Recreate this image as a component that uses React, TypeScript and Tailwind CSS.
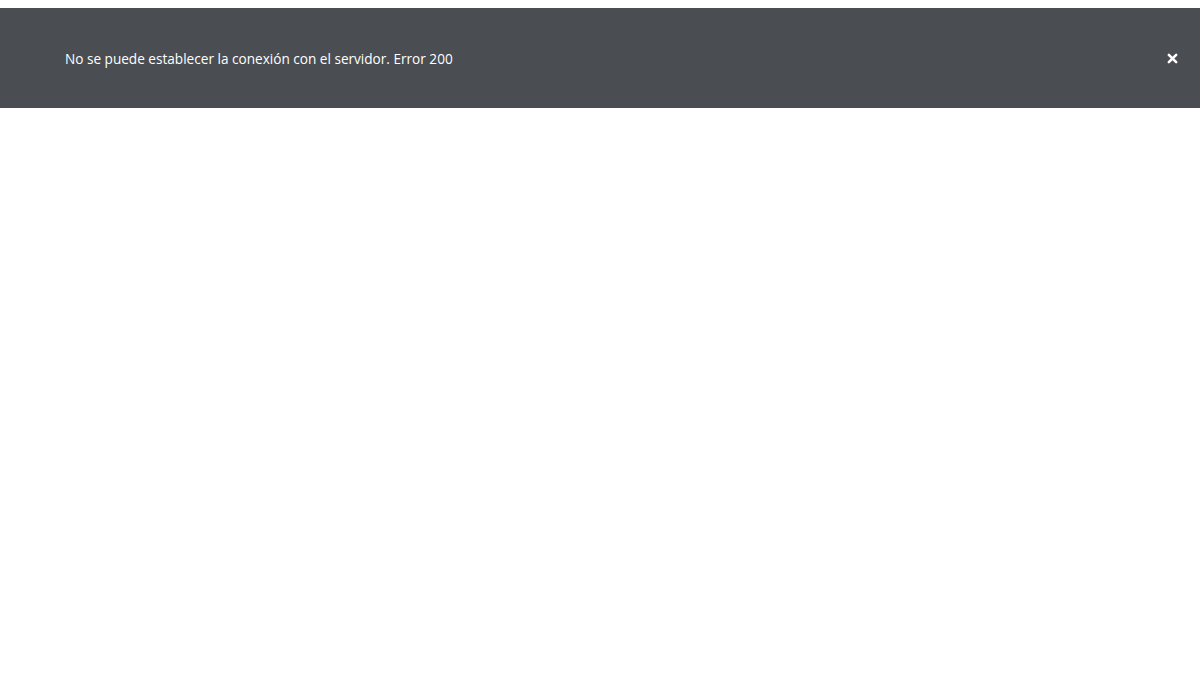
export default function App() {
  return (
    <div className="min-h-[682px] w-full bg-white pt-2" style={{ fontFamily: '"Open Sans", "Noto Sans", sans-serif' }}>
      <div className="flex h-[100px] items-center justify-between bg-[#4a4d52] pl-[65px] pr-[22px]">
        <p className="mt-[2px] text-[13.6px] leading-5 text-white">No se puede establecer la conexión con el servidor. Error 200</p>
        <button type="button" aria-label="Cerrar" className="-mr-[2px] flex h-4 w-4 items-center justify-center text-white">
          <svg viewBox="0 0 12 12" className="h-[11px] w-[11px]">
            <path d="M2 2 L10 10 M10 2 L2 10" stroke="currentColor" strokeWidth="2.8" strokeLinecap="round" />
          </svg>
        </button>
      </div>
    </div>
  );
}
